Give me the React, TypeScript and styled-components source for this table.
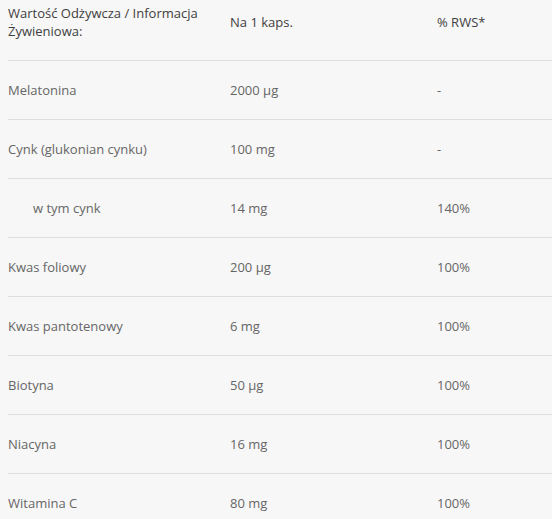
import React from 'react';
import styled, { createGlobalStyle } from 'styled-components';

const GlobalStyle = createGlobalStyle`
    html, body {
        margin: 0;
        padding: 0;
        background: #f7f7f7;
    }
    body {
        font-family: "Open Sans", "Liberation Sans", sans-serif;
        font-size: 13px;
        line-height: 18px;
        color: #666;
    }
`

const Table = styled.div`
    margin-left: 8px;
    display: flex;
    flex-direction: column;
`

const Row = styled.div<{ $head?: boolean }>`
    display: grid;
    grid-template-columns: 222px 207px 1fr;
    align-items: center;
    padding: ${props => props.$head ? '4px 0 20px' : '20px 0'};
    border-bottom: 1px solid #dedede;
    color: ${props => props.$head ? '#404040' : '#666'};
`

const Cell = styled.div<{ $indent?: boolean }>`
    padding-left: ${props => props.$indent ? '25px' : '0'};
`

interface Item {
    name: string;
    amount: string;
    rws: string;
    indent?: boolean;
}

const items: Item[] = [
    { name: 'Melatonina', amount: '2000 µg', rws: '-' },
    { name: 'Cynk (glukonian cynku)', amount: '100 mg', rws: '-' },
    { name: 'w tym cynk', amount: '14 mg', rws: '140%', indent: true },
    { name: 'Kwas foliowy', amount: '200 µg', rws: '100%' },
    { name: 'Kwas pantotenowy', amount: '6 mg', rws: '100%' },
    { name: 'Biotyna', amount: '50 µg', rws: '100%' },
    { name: 'Niacyna', amount: '16 mg', rws: '100%' },
    { name: 'Witamina C', amount: '80 mg', rws: '100%' },
]

function App() {
    return (
        <>
            <GlobalStyle />
            <Table>
                <Row $head>
                    <Cell>Wartość Odżywcza / Informacja<br />Żywieniowa:</Cell>
                    <Cell>Na 1 kaps.</Cell>
                    <Cell>% RWS*</Cell>
                </Row>
                {items.map(item => (
                    <Row key={item.name}>
                        <Cell $indent={item.indent}>{item.name}</Cell>
                        <Cell>{item.amount}</Cell>
                        <Cell>{item.rws}</Cell>
                    </Row>
                ))}
            </Table>
        </>
    );
}

export default App;
